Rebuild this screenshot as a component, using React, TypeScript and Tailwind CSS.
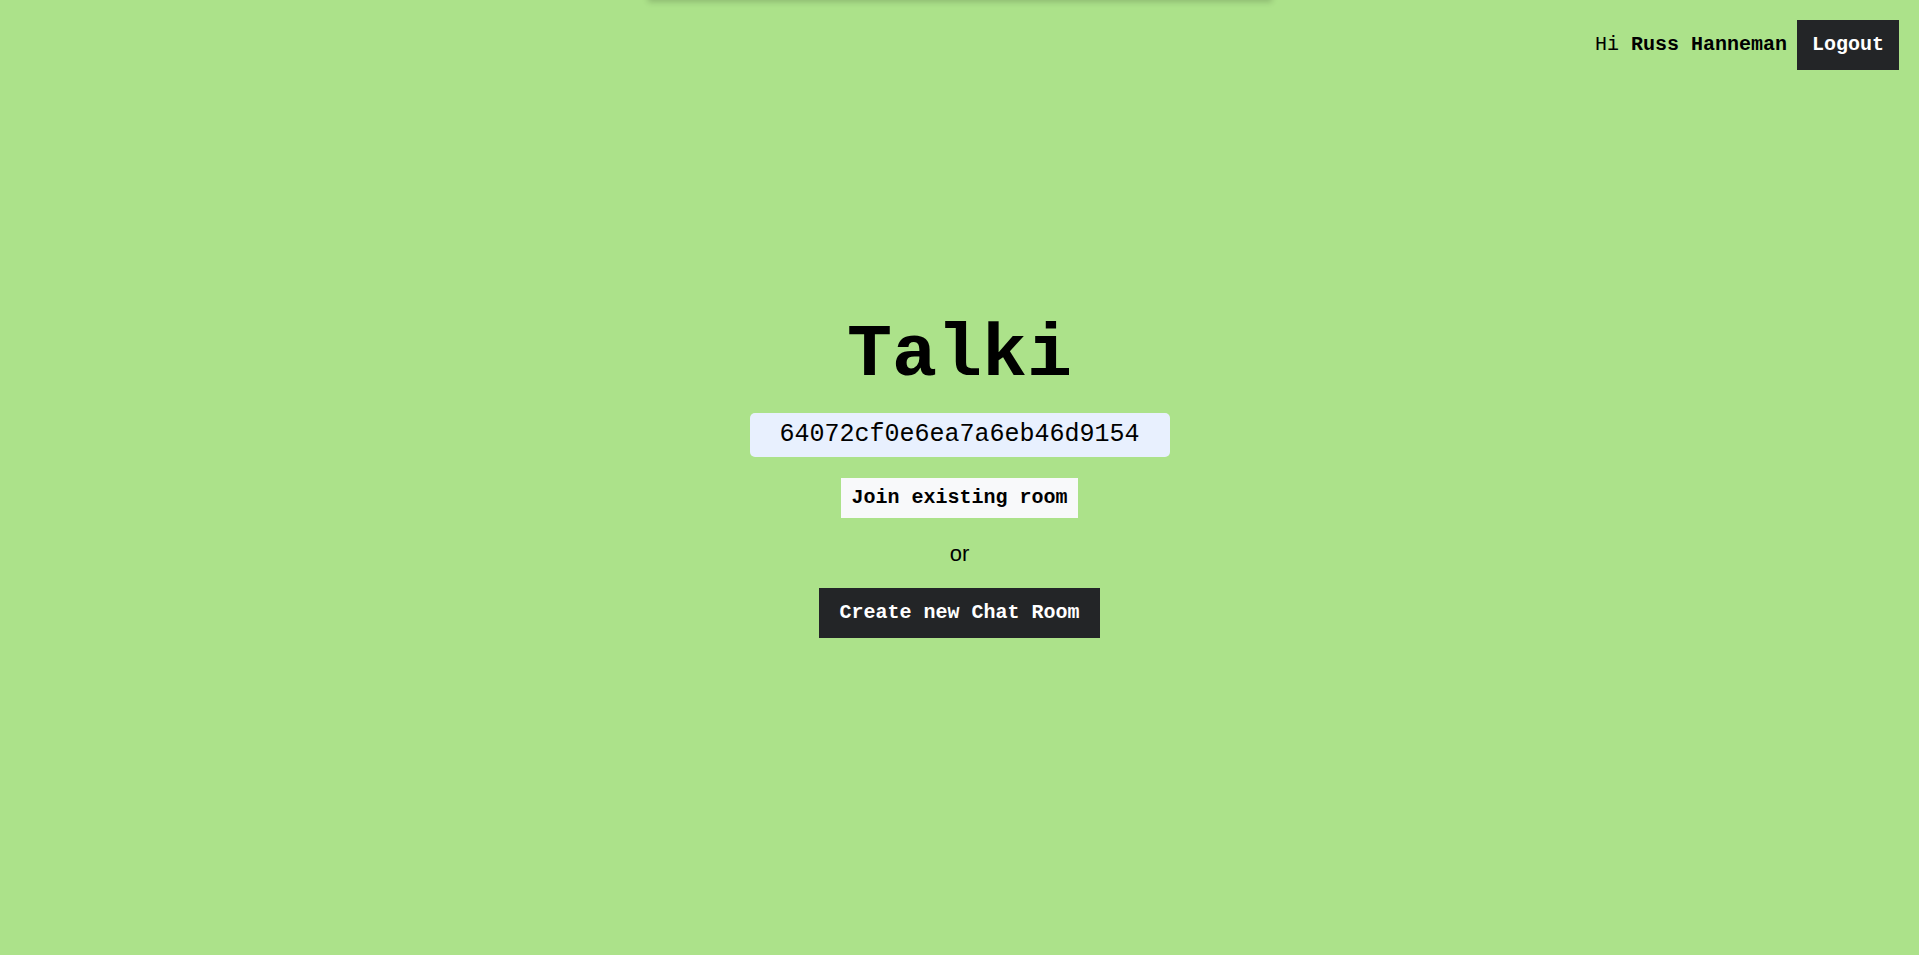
import React, { useState } from 'react';

const App: React.FC = () => {
  const [roomId, setRoomId] = useState('64072cf0e6ea7a6eb46d9154');

  return (
    <div className="relative grid h-screen w-full overflow-hidden bg-[#ace28a] font-['Liberation_Mono',monospace] text-black">
      {/* toast container peeking in from above the viewport */}
      <div className="absolute -top-12 left-1/2 h-12 w-[624px] -translate-x-1/2 bg-[#ace28a] shadow-[0_2px_6px_rgba(0,0,0,0.18)]" />

      <header className="[grid-area:1/1] flex items-center gap-[10px] self-start justify-self-end pt-5 pr-5">
        <span className="text-[20px]">
          Hi <strong className="font-bold">Russ Hanneman</strong>
        </span>
        <button className="h-[50px] bg-[#232527] px-[15px] text-[20px] font-bold text-white">Logout</button>
      </header>

      <main className="[grid-area:1/1] flex flex-col items-center self-center">
        <h1 className="text-[75px] font-bold leading-none">Talki</h1>
        <input
          value={roomId}
          onChange={e => setRoomId(e.target.value)}
          className="mt-[20px] h-[44px] w-[420px] rounded-[5px] bg-[#e8f0fe] text-center font-['Liberation_Mono',monospace] text-[25px] outline-none"
        />
        <button className="mt-[21px] h-[40px] bg-[#f8f9fa] px-[10px] text-[20px] font-bold">Join existing room</button>
        <p className="mt-[23px] font-['Liberation_Sans',Arial,sans-serif] text-[22px] leading-[25px]">or</p>
        <button className="mt-[22px] h-[50px] bg-[#232527] px-5 text-[20px] font-bold text-white">Create new Chat Room</button>
      </main>
    </div>
  );
};

export default App;
